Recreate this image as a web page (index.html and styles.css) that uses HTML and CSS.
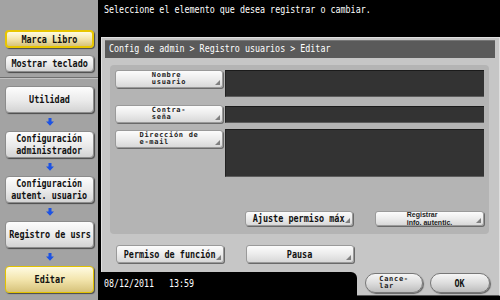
FILE: index.html
```html
<!DOCTYPE html>
<html lang="es">
<head>
<meta charset="utf-8">
<title>Editar usuario</title>
<link rel="stylesheet" href="styles.css">
</head>
<body>
<div class="screen">
  <aside class="side">
    <div class="side-top">
      <button class="sbtn sel thick tall18"><span class="t">Marca Libro</span></button>
      <button class="sbtn tall17"><span class="t">Mostrar teclado</span></button>
    </div>
    <div class="side-nav">
      <button class="sbtn nav"><span class="t">Utilidad</span></button>
      <div class="arrow"><svg width="8" height="8" viewBox="0 0 8 8"><path d="M2.5 0h3v3.5H8L4 7.8 0 3.5h2.5z"/></svg></div>
      <button class="sbtn nav"><span class="t t2">Configuración<br>administrador</span></button>
      <div class="arrow"><svg width="8" height="8" viewBox="0 0 8 8"><path d="M2.5 0h3v3.5H8L4 7.8 0 3.5h2.5z"/></svg></div>
      <button class="sbtn nav"><span class="t t2">Configuración<br>autent. usuario</span></button>
      <div class="arrow"><svg width="8" height="8" viewBox="0 0 8 8"><path d="M2.5 0h3v3.5H8L4 7.8 0 3.5h2.5z"/></svg></div>
      <button class="sbtn nav"><span class="t">Registro de usrs</span></button>
      <div class="arrow"><svg width="8" height="8" viewBox="0 0 8 8"><path d="M2.5 0h3v3.5H8L4 7.8 0 3.5h2.5z"/></svg></div>
      <button class="sbtn nav sel"><span class="t">Editar</span></button>
    </div>
  </aside>
  <main class="main">
    <div class="msg"><span class="tl">Seleccione el elemento que desea registrar o cambiar.</span></div>
    <div class="frame">
      <div class="frame-top">
        <div class="crumb"><span class="tl">Config de admin &gt; Registro usuarios &gt; Editar</span></div>
        <div class="panel">
          <div class="row row1">
            <button class="lbl"><span class="tiny">Nombre<br>usuario</span></button>
            <div class="field f1"></div>
          </div>
          <div class="row row2">
            <button class="lbl"><span class="tiny">Contra-<br>seña</span></button>
            <div class="field f2"></div>
          </div>
          <div class="row row3">
            <button class="lbl l3"><span class="tiny">Dirección de<br>e-mail</span></button>
            <div class="field f3"></div>
          </div>
          <div class="actions">
            <button class="lbl act"><span class="t">Ajuste permiso máx</span></button>
            <button class="lbl act"><span class="sans">Registrar<br>info. autentic.</span></button>
          </div>
        </div>
        <div class="frame-actions">
          <button class="lbl fbtn"><span class="t">Permiso de función</span></button>
          <button class="lbl fbtn"><span class="t">Pausa</span></button>
        </div>
      </div>
      <div class="frame-bottom">
        <div class="clock"><span class="tl">08/12/2011   13:59</span></div>
        <div class="ok-area">
          <button class="pill cancel"><span class="tiny">Cance-<br>lar</span></button>
          <button class="pill ok"><span class="t">OK</span></button>
        </div>
      </div>
    </div>
  </main>
</div>
</body>
</html>
```
FILE: styles.css
```css
* { box-sizing: border-box; }
html, body { margin: 0; padding: 0; background: #000; }
body { width: 500px; height: 300px; overflow: hidden; font-family: "DejaVu Sans Mono", monospace; }

button { font: inherit; margin: 0; padding: 0; color: #111; cursor: pointer; }

.screen { display: flex; width: 500px; height: 300px; background: #000; }

/* condensed text */
.t { display: inline-block; transform: scaleX(0.77); white-space: nowrap; font-weight: bold; font-size: 11px; line-height: 11px; }
.t2 { font-size: 10px; line-height: 12px; transform: scaleX(0.84); }
.tl { display: inline-block; vertical-align: top; transform: scaleX(0.76); transform-origin: 0 50%; white-space: pre; }

/* left side */
.side { width: 98px; background: #a3a3a3; display: flex; flex-direction: column; }
.side-top { height: 78px; padding: 30px 4px 0 5px; display: flex; flex-direction: column; gap: 7px; border-bottom: 1px solid #707070; }
.side-nav { flex: 1; padding: 7px 4px 0 5px; display: flex; flex-direction: column; border-top: 1px solid #c2c2c2; }

.sbtn {
  display: flex; align-items: center; justify-content: center; text-align: center;
  width: 89px; border: 1px solid #8c8c8c; border-radius: 4px;
  background: linear-gradient(#fdfdfd, #eaeaea 55%, #d3d3d3);
  box-shadow: 1px 1px 1px rgba(0,0,0,0.55);
}
.tall18 { height: 18px; }
.tall17 { height: 17px; }
.nav { height: 27px; }
.sel { background: linear-gradient(#fffbe2, #f3e5ad 50%, #d6c27a); border-color: #e2c200; }
.thick { border: 2px solid #e8c600; }

.arrow { height: 18px; display: flex; align-items: center; justify-content: center; }
.arrow svg { display: block; fill: #1c52e4; }

/* main */
.main { flex: 1; display: flex; flex-direction: column; }
.msg { height: 37px; padding: 4px 0 0 6px; color: #fff; font-size: 11px; line-height: 12px; }

.frame { flex: 1; margin-left: 3px; display: flex; flex-direction: column; }
.frame-top {
  height: 235px; background: #c6c6c6;
  border: 1px solid #e0e0e0; border-bottom: none;
  padding: 2px 4px 0 3px;
}
.crumb {
  height: 18px; background: #5a5a5a; color: #fff;
  border-top: 1px solid #777; padding: 2px 0 0 4px;
  font-size: 11px; line-height: 12px;
}

.panel {
  margin: 7px 6px 0 5px; height: 169px;
  background: #b4b4b4; border-radius: 4px;
  padding: 5px 5px 0 5px;
}
.row { display: flex; align-items: flex-start; gap: 2px; }
.row2 { margin-top: 8px; }
.row3 { margin-top: 6px; }

.lbl {
  position: relative; display: flex; align-items: center; justify-content: center;
  width: 108px; height: 18px;
  border: 1px solid #9a9a9a; border-radius: 3px;
  background: linear-gradient(#fcfcfc, #ececec 50%, #d8d8d8);
  box-shadow: 1px 1px 0 #6a6a6a;
}
.lbl::after {
  content: ""; position: absolute; right: 2px; bottom: 2px;
  width: 0; height: 0;
  border-left: 5px solid transparent; border-bottom: 5px solid #808080;
}
.l3 { margin-top: 1px; }

.tiny { display: block; text-align: left; font-size: 7px; letter-spacing: 0.7px; line-height: 7px; font-weight: bold; color: #222; white-space: nowrap; }
.sans { display: block; text-align: left; font-family: "Liberation Sans", Arial, sans-serif; font-size: 7px; line-height: 8px; font-weight: bold; color: #222; white-space: nowrap; }

.field {
  flex: 1; background: #333;
  border-top: 1px solid #1b1b1b; border-left: 1px solid #222;
  border-bottom: 1px solid #5c5c5c;
}
.f1 { height: 27px; }
.f2 { height: 17px; margin-top: 1px; }
.f3 { height: 48px; }

.actions { display: flex; justify-content: flex-end; gap: 22px; margin-top: 34px; }
.act { height: 15px; }
.act + .act { width: 109px; }

.frame-actions { display: flex; gap: 22px; margin-top: 11px; padding-left: 11px; }
.fbtn { height: 18px; }

.frame-bottom { height: 24px; display: flex; background: #c6c6c6; }
.clock { flex: 1; background: #000; color: #fff; padding: 6px 0 0 3px; border-top-right-radius: 6px; font-size: 10px; line-height: 12px; }
.clock .tl { transform: scaleX(0.83); }
.ok-area {
  width: 143px; display: flex; gap: 7px; padding: 1px 0 0 8px;
  border-right: 1px solid #e0e0e0; border-bottom: 1px solid #555;
}
.pill {
  display: flex; align-items: center; justify-content: center;
  height: 20px; border-radius: 10px; border: 1px solid #777;
  background: linear-gradient(#f6f6f6, #dadada 55%, #bcbcbc);
  box-shadow: 1px 1px 1px rgba(0,0,0,0.5);
}
.cancel { width: 58px; }
.ok { width: 60px; }
```
